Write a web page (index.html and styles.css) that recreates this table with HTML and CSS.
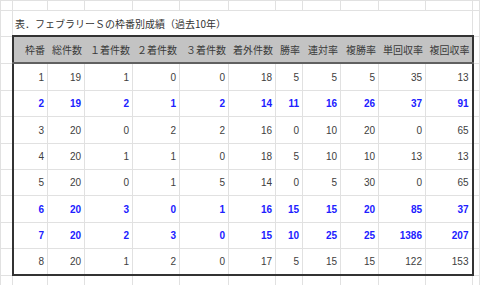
FILE: index.html
```html
<!DOCTYPE html>
<html lang="ja">
<head>
<meta charset="utf-8">
<title>フェブラリーＳの枠番別成績</title>
<link rel="stylesheet" href="styles.css">
</head>
<body>
<table class="sheet">
  <colgroup>
    <col class="c-edge">
    <col class="c-waku">
    <col class="c-total">
    <col class="c-w48">
    <col class="c-w47">
    <col class="c-w49">
    <col class="c-w47">
    <col class="c-win">
    <col class="c-w38">
    <col class="c-w38">
    <col class="c-w47">
    <col class="c-w47">
    <col class="c-right">
    <col class="c-rest">
  </colgroup>
  <tr class="r-top">
    <td></td><td></td><td></td><td></td><td></td><td></td><td></td><td></td><td></td><td></td><td></td><td></td><td></td><td></td>
  </tr>
  <tr class="r-title">
    <td></td>
    <td class="title" colspan="11">表．フェブラリーＳの枠番別成績（過去10年）</td>
    <td></td><td></td>
  </tr>
  <tr class="r-head">
    <td></td>
    <th class="hd first">枠番</th>
    <th class="hd">総件数</th>
    <th class="hd">１着件数</th>
    <th class="hd">２着件数</th>
    <th class="hd">３着件数</th>
    <th class="hd">着外件数</th>
    <th class="hd">勝率</th>
    <th class="hd">連対率</th>
    <th class="hd">複勝率</th>
    <th class="hd">単回収率</th>
    <th class="hd last">複回収率</th>
    <td></td><td></td>
  </tr>
  <tr class="r-a">
    <td></td>
    <td class="n first">1</td><td class="n">19</td><td class="n">1</td><td class="n">0</td><td class="n">0</td><td class="n">18</td><td class="n">5</td><td class="n">5</td><td class="n">5</td><td class="n">35</td><td class="n last">13</td>
    <td></td><td></td>
  </tr>
  <tr class="r-b hi">
    <td></td>
    <td class="n first">2</td><td class="n">19</td><td class="n">2</td><td class="n">1</td><td class="n">2</td><td class="n">14</td><td class="n">11</td><td class="n">16</td><td class="n">26</td><td class="n">37</td><td class="n last">91</td>
    <td></td><td></td>
  </tr>
  <tr class="r-a">
    <td></td>
    <td class="n first">3</td><td class="n">20</td><td class="n">0</td><td class="n">2</td><td class="n">2</td><td class="n">16</td><td class="n">0</td><td class="n">10</td><td class="n">20</td><td class="n">0</td><td class="n last">65</td>
    <td></td><td></td>
  </tr>
  <tr class="r-b">
    <td></td>
    <td class="n first">4</td><td class="n">20</td><td class="n">1</td><td class="n">1</td><td class="n">0</td><td class="n">18</td><td class="n">5</td><td class="n">10</td><td class="n">10</td><td class="n">13</td><td class="n last">13</td>
    <td></td><td></td>
  </tr>
  <tr class="r-b">
    <td></td>
    <td class="n first">5</td><td class="n">20</td><td class="n">0</td><td class="n">1</td><td class="n">5</td><td class="n">14</td><td class="n">0</td><td class="n">5</td><td class="n">30</td><td class="n">0</td><td class="n last">65</td>
    <td></td><td></td>
  </tr>
  <tr class="r-a hi">
    <td></td>
    <td class="n first">6</td><td class="n">20</td><td class="n">3</td><td class="n">0</td><td class="n">1</td><td class="n">16</td><td class="n">15</td><td class="n">15</td><td class="n">20</td><td class="n">85</td><td class="n last">37</td>
    <td></td><td></td>
  </tr>
  <tr class="r-b hi">
    <td></td>
    <td class="n first">7</td><td class="n">20</td><td class="n">2</td><td class="n">3</td><td class="n">0</td><td class="n">15</td><td class="n">10</td><td class="n">25</td><td class="n">25</td><td class="n">1386</td><td class="n last">207</td>
    <td></td><td></td>
  </tr>
  <tr class="r-b end">
    <td></td>
    <td class="n first">8</td><td class="n">20</td><td class="n">1</td><td class="n">2</td><td class="n">0</td><td class="n">17</td><td class="n">5</td><td class="n">15</td><td class="n">15</td><td class="n">122</td><td class="n last">153</td>
    <td></td><td></td>
  </tr>
  <tr class="r-bottom">
    <td></td><td></td><td></td><td></td><td></td><td></td><td></td><td></td><td></td><td></td><td></td><td></td><td></td><td></td>
  </tr>
</table>
</body>
</html>
```
FILE: styles.css
```css
html, body {
  margin: 0;
  padding: 0;
  background: #ffffff;
  overflow: hidden;
}

.sheet {
  border-collapse: collapse;
  table-layout: fixed;
  width: 480px;
  font-family: "Liberation Sans", "Noto Sans CJK JP", sans-serif;
  font-size: 10px;
  color: #404040;
}

.c-edge { width: 12px; }
.c-waku { width: 35px; }
.c-total { width: 37px; }
.c-w48 { width: 48px; }
.c-w47 { width: 47px; }
.c-w49 { width: 49px; }
.c-win { width: 27px; }
.c-w38 { width: 38px; }
.c-right { width: 7px; }
.c-rest { width: 1px; }

.sheet td,
.sheet th {
  border: 1px solid #e1e1e1;
  padding: 0 3px 0 0;
  text-align: right;
  vertical-align: middle;
  white-space: nowrap;
  overflow: visible;
}

.r-top td { height: 9px; }
.r-title td { height: 24px; }
.r-head th, .r-head td { height: 25px; }
.r-a td { height: 26px; }
.r-b td { height: 25px; }
.r-bottom td { height: 12px; }

.sheet .title {
  text-align: left;
  padding-left: 2px;
  font-family: "Noto Sans CJK JP", sans-serif;
  font-size: 10px;
  color: #333333;
}

.sheet .hd {
  background: #c3c3c3;
  font-family: "Noto Sans CJK JP", sans-serif;
  font-weight: normal;
  font-size: 10px;
  color: #3a3a3a;
  padding-right: 2px;
  border-top: 2px solid #333333;
  border-bottom: 2px solid #606060;
  border-left-color: #c3c3c3;
  border-right-color: #c3c3c3;
}

.sheet .first { border-left: 2px solid #333333; }
.sheet .last { border-right: 2px solid #333333; }
.end td.n { border-bottom: 2px solid #333333; }

.hi td.n {
  color: #2020ff;
  font-weight: bold;
}
```
